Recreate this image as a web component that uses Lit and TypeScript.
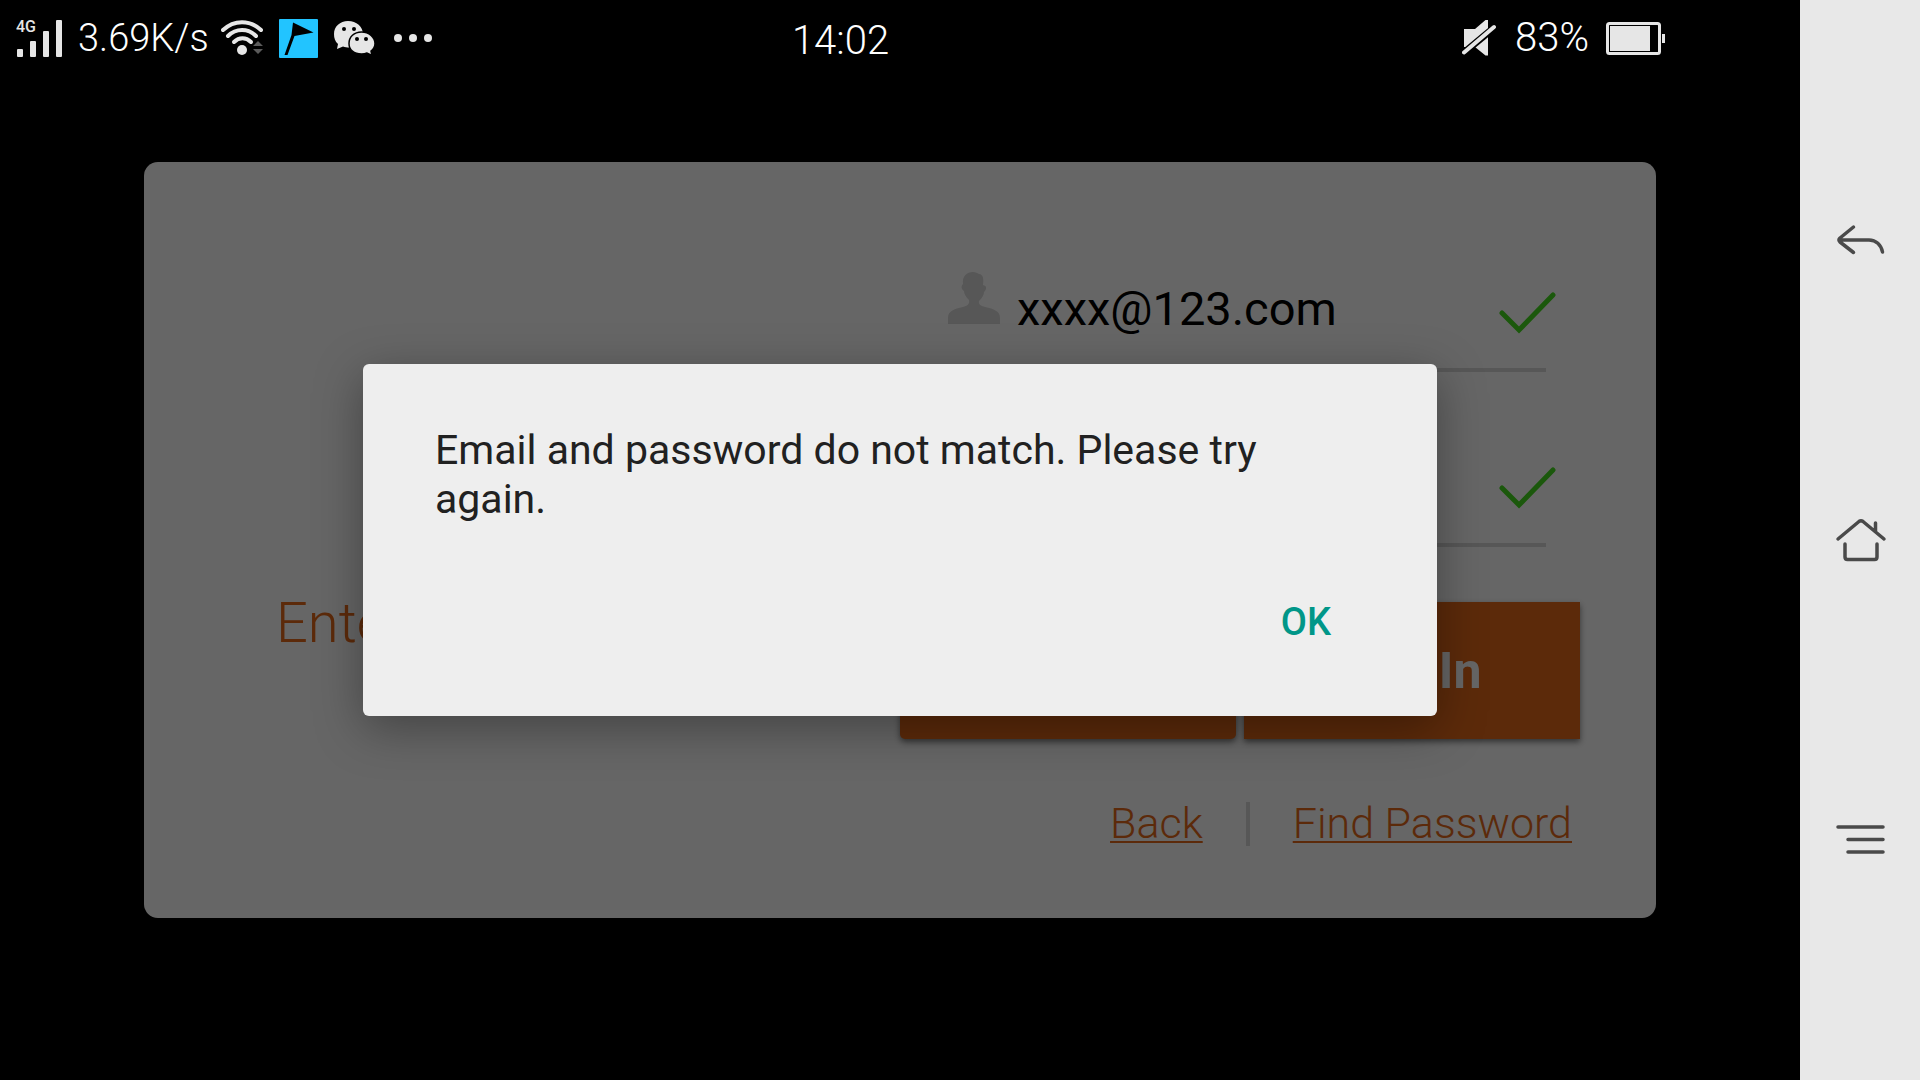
import { LitElement, html, css, svg } from "lit";
import { customElement, property } from "lit/decorators.js";

@customElement("status-bar")
export class StatusBar extends LitElement {
  static styles = css`
    :host {
      display: grid;
      grid-template-columns: 1fr auto 1fr;
      align-items: center;
      height: 76px;
      padding: 0 135px 0 16px;
      color: #fff;
      font-size: 40px;
      line-height: 48px;
      font-weight: 300;
    }
    .group {
      display: flex;
      align-items: center;
    }
    .end {
      justify-content: flex-end;
      gap: 17px;
    }
    .start {
      gap: 15px;
    }
    .tight {
      display: flex;
      align-items: center;
      gap: 12px;
      font-size: 38px;
    }
    time {
      padding-top: 6px;
    }
    svg {
      display: block;
      flex: none;
      fill: #e6e6e6;
    }
    .net {
      font: 500 16px Roboto, sans-serif;
    }
  `;

  render() {
    return html`
      <div class="group start">
        <svg width="47" height="40" viewBox="0 0 47 40" role="img" aria-label="Mobile signal">
          <text class="net" x="0" y="14">4G</text>
          <rect x="1" y="31" width="6" height="8" rx="1" />
          <rect x="14" y="23" width="6" height="16" rx="1" />
          <rect x="27" y="13" width="6" height="26" rx="1" />
          <rect x="40" y="2" width="6" height="37" rx="1" />
        </svg>
        <div class="tight">
          <span>3.69K/s</span>
          <svg width="43" height="36" viewBox="0 0 43 36" role="img" aria-label="Wi-Fi">
            <g fill="none" stroke="#e6e6e6" stroke-width="4" stroke-linecap="round">
              <path d="M2 10C13-.5 29-.5 40 10" />
              <path d="M7 16C15 8 27 8 35 16" />
              <path d="M13 22C18 17 25 17 30 22" />
            </g>
            <circle cx="21" cy="30" r="5" />
            <path d="M32 26l5-5 5 5zM32 29l5 5 5-5z" fill="#5a5a5a" />
          </svg>
        </div>
        <svg width="39" height="39" viewBox="0 0 39 39" aria-hidden="true">
          <rect width="39" height="39" rx="1" fill="#22c4ff" />
          <path d="M14 3.500l20.500 10L15.500 17 8.500 36H5.500l7-20z" fill="#000" />
        </svg>
        <svg width="42" height="36" viewBox="0 0 42 36" aria-hidden="true">
          <path
            d="M15 1C7 1 1 6.500 1 14c0 4 1 7.500 4 10l-1 5 6-2.500c2 .8 4 1 6 1a14 13 0 0 0 14-13C30 6.500 23.500 1 15 1z"
          />
          <path
            d="M28.500 12C21 12 16 17 16 23.500S21 34 28.500 34c2 0 4-.3 5.500-1l5 2.500-1-4.500c2.700-2 4-4.500 4-7.500C42 17 36 12 28.500 12z"
            stroke="#000"
            stroke-width="1.500"
          />
          <g fill="#000">
            <circle cx="11" cy="9" r="2" />
            <circle cx="21" cy="9" r="2" />
            <circle cx="24" cy="19" r="2" />
            <circle cx="33" cy="19" r="2" />
          </g>
        </svg>
        <svg width="46" height="10" viewBox="0 0 46 10" aria-hidden="true">
          <circle cx="8" cy="5" r="4" />
          <circle cx="23" cy="5" r="4" />
          <circle cx="38" cy="5" r="4" />
        </svg>
      </div>
      <time>14:02</time>
      <div class="group end">
        <svg width="36" height="38" viewBox="0 0 36 38" role="img" aria-label="Muted">
          <path d="M2 10h11L23.500 1H26v35.500h-2.500L13 28H2z" />
          <path d="M-1 36L34 7" stroke="#000" stroke-width="7" />
          <path d="M2 33.500L32 8" stroke="#e6e6e6" stroke-width="4" stroke-linecap="round" />
        </svg>
        <span>83%</span>
        <svg width="59" height="33" viewBox="0 0 59 33" role="img" aria-label="Battery">
          <rect x="1.500" y="1.500" width="52" height="30" rx="2" fill="none" stroke="#e6e6e6" stroke-width="3" />
          <rect x="4" y="4" width="40" height="25" />
          <rect x="56" y="12" width="3" height="9" />
        </svg>
      </div>
    `;
  }
}

@customElement("login-field")
export class LoginField extends LitElement {
  @property() type = "text";
  @property() label = "";
  @property() value = "";

  static styles = css`
    :host {
      display: flex;
      align-items: flex-end;
      height: 175px;
      margin: 0 34px 0 48px;
      box-sizing: border-box;
      border-bottom: 4px solid #d9d9d9;
      padding-bottom: 24px;
    }
    label {
      display: flex;
      flex: 1;
      gap: 17px;
      min-width: 0;
    }
    input {
      flex: 1;
      min-width: 0;
      height: 72px;
      padding: 0;
      border: 0;
      outline: 0;
      background: none;
      color: #000;
      font: inherit;
      font-size: 47px;
      font-weight: 400;
    }
    svg {
      display: block;
      flex: none;
    }
    .check {
      margin-right: -12px;
    }
  `;

  render() {
    return html`
      <label>
        <svg width="52" height="72" viewBox="0 0 52 72" role="img" aria-label=${this.label}>
          <path
            fill="#d9d9d9"
            d="M0 52v-6c0-7 6-9 15-11 4-1 7-3 6-7-3-3-5-6-5-9-3-2-3-5-1-7C14 4 19 0 25 0c3 0 4 1 6 2 4 0 5 5 4 11 4 1 4 4 1 7 0 3-2 6-5 9-1 4 3 5 6 6 9 2 15 4 15 11v6z"
          />
        </svg>
        <input type=${this.type} .value=${this.value} aria-label=${this.label} />
      </label>
      <svg class="check" width="60" height="72" viewBox="0 0 60 72" role="img" aria-label="Valid">
        <path
          d="M4 41l17 17L55 23"
          fill="none"
          stroke="#45dc1e"
          stroke-width="5"
          stroke-linecap="round"
        />
      </svg>
    `;
  }
}

@customElement("login-card")
export class LoginCard extends LitElement {
  static styles = css`
    :host {
      display: grid;
      grid-template-columns: minmax(0, 1fr) minmax(0, 1fr);
      border-radius: 14px;
      background: #fff;
      color: #e66a1a;
    }
    .intro {
      padding: 428px 0 0 132px;
    }
    p {
      margin: 0;
      font-size: 56px;
      line-height: 67px;
      font-weight: 300;
    }
    form {
      padding: 35px 76px 0 0;
    }
    .actions {
      display: flex;
      gap: 8px;
      margin-top: 55px;
    }
    button {
      flex: 1;
      height: 137px;
      border: 0;
      background: #e66a1a;
      box-shadow: 0 3px 6px rgba(0, 0, 0, 0.5);
      color: #fff;
      font: inherit;
      font-size: 50px;
      font-weight: 700;
    }
    .secondary {
      border-radius: 5px;
    }
    .links {
      display: flex;
      justify-content: flex-end;
      align-items: center;
      gap: 43px;
      margin-top: 58px;
      padding-right: 8px;
      font-size: 43px;
      line-height: 53px;
      font-weight: 300;
    }
    .links i {
      width: 4px;
      height: 44px;
      background: #d9d9d9;
    }
    a {
      color: inherit;
      text-decoration-thickness: 2px;
      text-decoration-skip-ink: none;
      text-underline-offset: 3px;
    }
  `;

  render() {
    return html`
      <div class="intro"><p>Enter</p></div>
      <form>
        <login-field type="email" label="Email" value="xxxx@123.com"></login-field>
        <login-field type="password" label="Password"></login-field>
        <div class="actions">
          <button type="button" class="secondary" aria-label="Register"></button>
          <button type="button">Log In</button>
        </div>
        <div class="links">
          <a href="#back">Back</a>
          <i></i>
          <a href="#find-password">Find Password</a>
        </div>
      </form>
    `;
  }
}

@customElement("nav-bar")
export class NavBar extends LitElement {
  static styles = css`
    :host {
      display: flex;
      flex-direction: column;
      justify-content: space-around;
      align-items: center;
      padding: 90px 0;
      background: #e8e8e8;
    }
    button {
      padding: 0;
      border: 0;
      background: none;
    }
    svg {
      display: block;
      fill: none;
      stroke: #4a4a4a;
      stroke-width: 3.500;
      stroke-linecap: round;
      stroke-linejoin: round;
    }
  `;

  private items = [
    { label: "Back", icon: svg`<path d="M21.500 15L8 26q-2 2 0 4l13.500 10.500M8 28h29c7 0 12 5 13.500 12" />` },
    {
      label: "Home",
      icon: svg`<path d="M6 27L27 9.500q2-1.500 4 0L52 27M43.500 11v8M13 32v13q0 2.500 2.500 2.500h27q2.500 0 2.500-2.500V32" />`,
    },
    { label: "Menu", icon: svg`<path d="M6 15h45M16 27.500h35M16 40h35" />` },
  ];

  render() {
    return this.items.map(
      (item) => html`
        <button type="button" aria-label=${item.label}>
          <svg width="56" height="56" viewBox="0 0 56 56">${item.icon}</svg>
        </button>
      `,
    );
  }
}

@customElement("app-root")
export class AppRoot extends LitElement {
  static styles = css`
    :host {
      display: grid;
      grid-template-columns: 1fr 120px;
      min-height: 100vh;
      background: #000;
      font-family: Roboto, "Liberation Sans", sans-serif;
    }
    main {
      position: relative;
      display: flex;
      flex-direction: column;
    }
    status-bar {
      position: relative;
      z-index: 1;
    }
    login-card {
      flex: 1;
      margin: 86px 8% 162px;
    }
    .scrim {
      position: absolute;
      inset: 0;
      display: grid;
      place-items: center;
      background: rgba(0, 0, 0, 0.6);
    }
    .dialog {
      width: 60%;
      max-width: 1074px;
      box-sizing: border-box;
      padding: 62px 72px 57px;
      border-radius: 6px;
      background: #eee;
      box-shadow: 0 12px 48px rgba(0, 0, 0, 0.35);
      color: #212121;
    }
    p {
      margin: 0;
      font-size: 41px;
      line-height: 49px;
    }
    .actions {
      display: flex;
      justify-content: flex-end;
      margin-top: 60px;
      padding-right: 10px;
    }
    .actions button {
      padding: 0 24px;
      height: 75px;
      border: 0;
      background: none;
      color: #009688;
      font: inherit;
      font-size: 38px;
      font-weight: 500;
    }
  `;

  render() {
    return html`
      <main>
        <status-bar></status-bar>
        <login-card></login-card>
        <div class="scrim">
          <div class="dialog" role="alertdialog" aria-modal="true" aria-describedby="message">
            <p id="message">Email and password do not match. Please try again.</p>
            <div class="actions"><button type="button">OK</button></div>
          </div>
        </div>
      </main>
      <nav-bar></nav-bar>
    `;
  }
}
